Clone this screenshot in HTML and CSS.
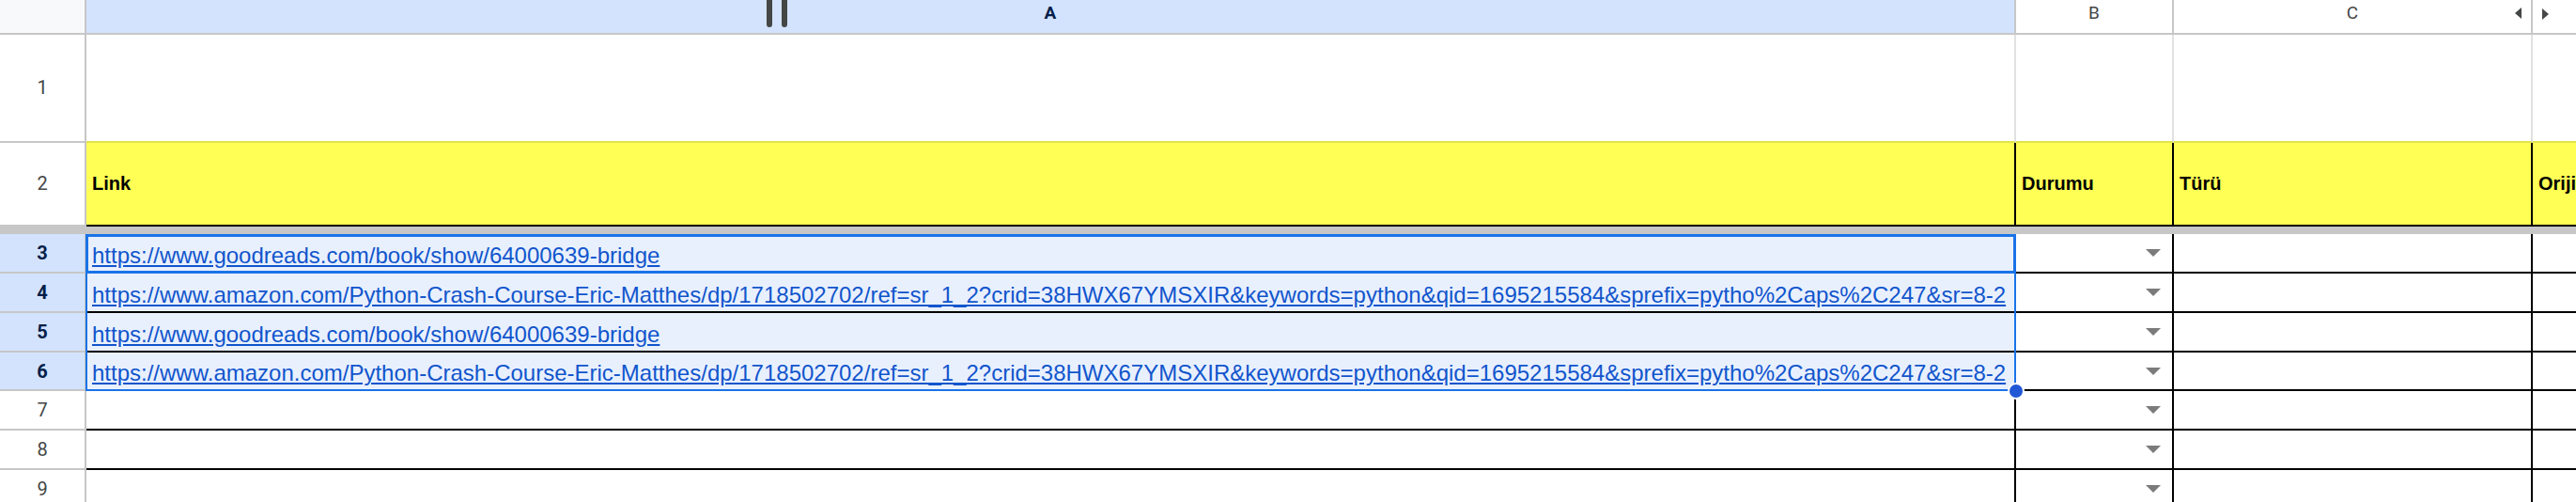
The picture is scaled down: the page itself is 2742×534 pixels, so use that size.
FILE: index.html
```html
<!DOCTYPE html>
<html lang="tr">
<head>
<meta charset="utf-8">
<title>Sheet</title>
<link rel="stylesheet" href="styles.css">
</head>
<body>
<div class="sheet">
  <!-- column header row -->
  <div class="hdr corner"></div>
  <div class="hdr sel colA">
    <div class="grip"><span></span><span></span></div>
    A
  </div>
  <div class="hdr">B</div>
  <div class="hdr colC">C
    <svg class="arrow-l" width="7" height="12" viewBox="0 0 7 12"><polygon points="7,0 7,12 0,6"/></svg>
  </div>
  <div class="hdr colD">
    <svg class="arrow-r" width="7" height="12" viewBox="0 0 7 12"><polygon points="0,0 0,12 7,6"/></svg>
  </div>

  <!-- row 1 -->
  <div class="rh">1</div>
  <div class="r1"></div>
  <div class="r1"></div>
  <div class="r1"></div>
  <div class="r1 last"></div>

  <!-- row 2 -->
  <div class="rh">2</div>
  <div class="r2">Link</div>
  <div class="r2">Durumu</div>
  <div class="r2">Türü</div>
  <div class="r2 last">Orijinal Adı</div>

  <div class="freeze"></div>

  <!-- row 3 -->
  <div class="rh sel">3</div>
  <div class="d sel first">
    <a class="link">https://www.goodreads.com/book/show/64000639-bridge</a>
    <div class="range"><div class="handle"></div></div>
    <div class="active"></div>
  </div>
  <div class="d dd"><svg width="16" height="8" viewBox="0 0 16 8"><polygon points="0,0 16,0 8,8"/></svg></div>
  <div class="d"></div>
  <div class="d last"></div>

  <!-- row 4 -->
  <div class="rh sel">4</div>
  <div class="d sel"><a class="link">https://www.amazon.com/Python-Crash-Course-Eric-Matthes/dp/1718502702/ref=sr_1_2?crid=38HWX67YMSXIR&amp;keywords=python&amp;qid=1695215584&amp;sprefix=pytho%2Caps%2C247&amp;sr=8-2</a></div>
  <div class="d dd"><svg width="16" height="8" viewBox="0 0 16 8"><polygon points="0,0 16,0 8,8"/></svg></div>
  <div class="d"></div>
  <div class="d last"></div>

  <!-- row 5 -->
  <div class="rh sel">5</div>
  <div class="d sel"><a class="link">https://www.goodreads.com/book/show/64000639-bridge</a></div>
  <div class="d dd"><svg width="16" height="8" viewBox="0 0 16 8"><polygon points="0,0 16,0 8,8"/></svg></div>
  <div class="d"></div>
  <div class="d last"></div>

  <!-- row 6 -->
  <div class="rh sel">6</div>
  <div class="d sel"><a class="link">https://www.amazon.com/Python-Crash-Course-Eric-Matthes/dp/1718502702/ref=sr_1_2?crid=38HWX67YMSXIR&amp;keywords=python&amp;qid=1695215584&amp;sprefix=pytho%2Caps%2C247&amp;sr=8-2</a></div>
  <div class="d dd"><svg width="16" height="8" viewBox="0 0 16 8"><polygon points="0,0 16,0 8,8"/></svg></div>
  <div class="d"></div>
  <div class="d last"></div>

  <!-- row 7 -->
  <div class="rh">7</div>
  <div class="d"></div>
  <div class="d dd"><svg width="16" height="8" viewBox="0 0 16 8"><polygon points="0,0 16,0 8,8"/></svg></div>
  <div class="d"></div>
  <div class="d last"></div>

  <!-- row 8 -->
  <div class="rh">8</div>
  <div class="d"></div>
  <div class="d dd"><svg width="16" height="8" viewBox="0 0 16 8"><polygon points="0,0 16,0 8,8"/></svg></div>
  <div class="d"></div>
  <div class="d last"></div>

  <!-- row 9 -->
  <div class="rh">9</div>
  <div class="d"></div>
  <div class="d dd"><svg width="16" height="8" viewBox="0 0 16 8"><polygon points="0,0 16,0 8,8"/></svg></div>
  <div class="d"></div>
  <div class="d last"></div>
</div>
</body>
</html>
```

FILE: styles.css
```css
html, body {
  margin: 0;
  padding: 0;
  overflow: hidden;
  background: #ffffff;
}

.sheet {
  display: grid;
  grid-template-columns: 92px 2054px 168px 382px 240px;
  grid-template-rows: 37px 114.7px 89.6px 8px repeat(7, 41.8px);
  width: 2936px;
  font-family: "Liberation Sans", Arial, sans-serif;
}

.sheet > div {
  box-sizing: border-box;
  min-width: 0;
}

/* column headers */
.hdr {
  display: flex;
  align-items: center;
  justify-content: center;
  padding-bottom: 8px;
  border-right: 2px solid #c7c7c7;
  border-bottom: 2px solid #c7c7c7;
  background: #ffffff;
  font-family: Roboto, "Noto Sans", sans-serif;
  font-size: 19px;
  color: #444746;
}
.hdr.corner { background: #f8f9fa; }
.hdr.sel {
  background: #d3e3fd;
  color: #041e49;
  font-weight: 700;
}
.colA { position: relative; }
.grip {
  position: absolute;
  left: 724px;
  top: 0;
  display: flex;
  gap: 10px;
}
.grip span {
  display: block;
  width: 6px;
  height: 29px;
  background: #444746;
  border-radius: 0 0 3px 3px;
}
.colC { position: relative; }
.arrow-l {
  position: absolute;
  right: 10px;
  top: 8px;
  fill: #444746;
}
.colD {
  justify-content: flex-start;
  padding-left: 10px;
  padding-bottom: 6px;
  border-right: none;
}
.arrow-r { fill: #444746; }

/* row headers */
.rh {
  display: flex;
  align-items: center;
  justify-content: center;
  border-right: 2px solid #c7c7c7;
  border-bottom: 2px solid #c7c7c7;
  background: #ffffff;
  font-family: Roboto, "Noto Sans", sans-serif;
  font-size: 20px;
  color: #444746;
}
.rh.sel {
  background: #d3e3fd;
  color: #041e49;
  font-weight: 700;
}

/* row 1 */
.r1 {
  border-right: 2px solid #e1e1e1;
  border-bottom: 2px solid #e3e34c;
}

/* row 2 (yellow header) */
.r2 {
  display: flex;
  align-items: center;
  padding-left: 6px;
  background: #ffff55;
  border-right: 2px solid #000000;
  border-bottom: 2px solid #000000;
  font-weight: 700;
  font-size: 20px;
  color: #000000;
  white-space: nowrap;
  overflow: hidden;
}

.last { border-right: none; }

/* frozen divider */
.freeze {
  grid-column: 1 / -1;
  background: #c7c7c7;
}

/* data cells */
.d {
  display: flex;
  align-items: flex-end;
  padding: 0 6px 4px 6px;
  border-right: 2px solid #000000;
  border-bottom: 2px solid #000000;
  white-space: nowrap;
}
.d.sel { background: #e8f0fe; }
.d.first { position: relative; }
.link {
  font-size: 24px;
  line-height: 27px;
  color: #1155cc;
  text-decoration: underline;
}
.dd {
  align-items: center;
  justify-content: flex-end;
  padding: 0 12px 0 0;
}
.dd svg { fill: #7b7b7b; }

/* selection overlay (A3:A6) */
.range {
  position: absolute;
  left: -1px;
  right: -2px;
  top: 0;
  height: 167.2px;
  box-sizing: border-box;
  border: 2px solid #1a73e8;
  z-index: 2;
  pointer-events: none;
}
.active {
  position: absolute;
  left: -1px;
  right: -2px;
  top: 0;
  bottom: -2px;
  box-sizing: border-box;
  border: 3px solid #1a73e8;
  z-index: 3;
  pointer-events: none;
}
.handle {
  position: absolute;
  right: -11px;
  bottom: -11px;
  width: 14px;
  height: 14px;
  border-radius: 50%;
  background: #2158d6;
  border: 2px solid #ffffff;
}
```
